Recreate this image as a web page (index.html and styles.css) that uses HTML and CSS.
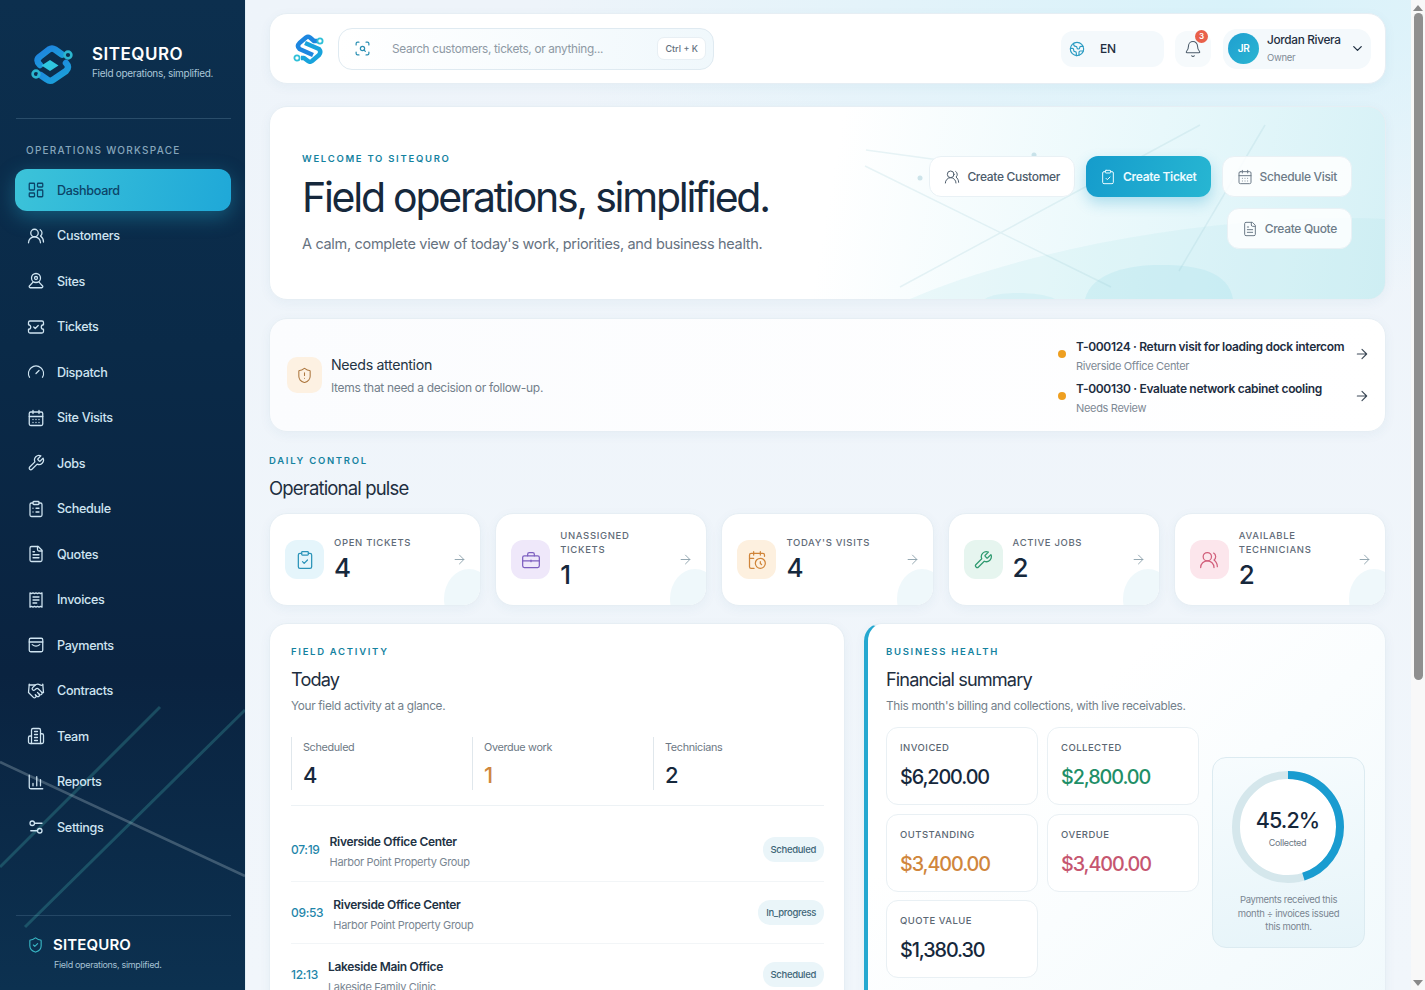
FILE: index.html
```html
<!DOCTYPE html>
<html lang="en">
<head>
<meta charset="utf-8">
<title>SiteQuro Dashboard</title>
<link rel="stylesheet" href="styles.css">
</head>
<body>
<svg class="defs" aria-hidden="true">
<defs>
<linearGradient id="ribbon" x1="0" y1="0" x2="1" y2="1"><stop offset="0" stop-color="#1f7fe0"/><stop offset="1" stop-color="#1aa6d8"/></linearGradient>
<symbol id="i-dash" viewBox="0 0 24 24"><rect width="7" height="9" x="3" y="3" rx="1"/><rect width="7" height="5" x="14" y="3" rx="1"/><rect width="7" height="9" x="14" y="12" rx="1"/><rect width="7" height="5" x="3" y="16" rx="1"/></symbol>
<symbol id="i-users" viewBox="0 0 24 24"><path d="M18 21a8 8 0 0 0-16 0"/><circle cx="10" cy="8" r="5"/><path d="M22 20c0-3.37-2-6.5-4-8a5 5 0 0 0-.45-8.3"/></symbol>
<symbol id="i-site" viewBox="0 0 24 24"><circle cx="12" cy="8" r="6"/><circle cx="12" cy="8" r="2"/><path d="M8 13.5 3.2 18.6A1.5 1.5 0 0 0 4.3 21h15.4a1.500 1.500 0 0 0 1.100-2.400L16 13.500"/></symbol>
<symbol id="i-ticket" viewBox="0 0 24 24"><path d="M2 9a3 3 0 0 1 0 6v3a2 2 0 0 0 2 2h16a2 2 0 0 0 2-2v-3a3 3 0 0 1 0-6V6a2 2 0 0 0-2-2H4a2 2 0 0 0-2 2Z"/><path d="m9 12 2 2 4-4"/></symbol>
<symbol id="i-gauge" viewBox="0 0 24 24"><path d="m12 14 4-4"/><path d="M3.340 19a10 10 0 1 1 17.320 0"/></symbol>
<symbol id="i-cal" viewBox="0 0 24 24"><rect x="3" y="4" width="18" height="18" rx="2"/><path d="M16 2v4M8 2v4M3 10h18M8 14h.01M12 14h.01M16 14h.01M8 18h.01M12 18h.01M16 18h.01"/></symbol>
<symbol id="i-wrench" viewBox="0 0 24 24"><path d="M14.700 6.300a1 1 0 0 0 0 1.400l1.600 1.600a1 1 0 0 0 1.400 0l3.770-3.770a6 6 0 0 1-7.940 7.940l-6.910 6.910a2.120 2.120 0 0 1-3-3l6.910-6.910a6 6 0 0 1 7.940-7.940l-3.760 3.760z"/></symbol>
<symbol id="i-cliplist" viewBox="0 0 24 24"><rect x="8" y="2" width="8" height="4" rx="1"/><path d="M16 4h2a2 2 0 0 1 2 2v14a2 2 0 0 1-2 2H6a2 2 0 0 1-2-2V6a2 2 0 0 1 2-2h2"/><path d="M12 11h4M12 16h4M8 11h.01M8 16h.01"/></symbol>
<symbol id="i-clipcheck" viewBox="0 0 24 24"><rect x="8" y="2" width="8" height="4" rx="1"/><path d="M16 4h2a2 2 0 0 1 2 2v14a2 2 0 0 1-2 2H6a2 2 0 0 1-2-2V6a2 2 0 0 1 2-2h2"/><path d="m9 14 2 2 4-4"/></symbol>
<symbol id="i-file" viewBox="0 0 24 24"><path d="M15 2H6a2 2 0 0 0-2 2v16a2 2 0 0 0 2 2h12a2 2 0 0 0 2-2V7Z"/><path d="M14 2v4a2 2 0 0 0 2 2h4"/><path d="M10 9H8M16 13H8M16 17H8"/></symbol>
<symbol id="i-receipt" viewBox="0 0 24 24"><path d="M4 2.500l2 1 2-1 2 1 2-1 2 1 2-1 2 1 2-1v19l-2-1-2 1-2-1-2 1-2-1-2 1-2-1-2 1z"/><path d="M8 8h8M8 12h8M8 16h5"/></symbol>
<symbol id="i-wallet" viewBox="0 0 24 24"><rect x="3" y="3" width="18" height="18" rx="2"/><path d="M3 8h18"/><path d="M7 11.500q5 4 10 0"/></symbol>
<symbol id="i-hands" viewBox="0 0 24 24"><path d="m11 17 2 2a1 1 0 1 0 3-3"/><path d="m14 14 2.500 2.500a1 1 0 1 0 3-3l-3.880-3.880a3 3 0 0 0-4.240 0l-.88.88a1 1 0 1 1-3-3l2.810-2.810a5.790 5.790 0 0 1 7.060-.87l.47.28a2 2 0 0 0 1.420.25L21 4"/><path d="m21 3 1 11h-2"/><path d="M3 3 2 14l6.500 6.500a1 1 0 1 0 3-3"/><path d="M3 4h8"/></symbol>
<symbol id="i-build" viewBox="0 0 24 24"><path d="M6 22V4a2 2 0 0 1 2-2h8a2 2 0 0 1 2 2v18Z"/><path d="M6 12H4a2 2 0 0 0-2 2v6a2 2 0 0 0 2 2h2"/><path d="M18 9h2a2 2 0 0 1 2 2v9a2 2 0 0 1-2 2h-2"/><path d="M10 6h4M10 10h4M10 14h4M10 18h4"/></symbol>
<symbol id="i-chart" viewBox="0 0 24 24"><path d="M3 3v16a2 2 0 0 0 2 2h16"/><path d="M18 17V9M13 17V5M8 17v-3"/></symbol>
<symbol id="i-sliders" viewBox="0 0 24 24"><path d="M20 7h-9M14 17H5"/><circle cx="17" cy="17" r="3"/><circle cx="7" cy="7" r="3"/></symbol>
<symbol id="i-shieldok" viewBox="0 0 24 24"><path d="M20 13c0 5-3.500 7.500-7.660 8.950a1 1 0 0 1-.67-.01C7.500 20.500 4 18 4 13V6a1 1 0 0 1 1-1c2 0 4.500-1.200 6.240-2.720a1.170 1.170 0 0 1 1.520 0C14.510 3.810 17 5 19 5a1 1 0 0 1 1 1z"/><path d="m9 12 2 2 4-4"/></symbol>
<symbol id="i-shieldwarn" viewBox="0 0 24 24"><path d="M20 13c0 5-3.500 7.500-7.660 8.950a1 1 0 0 1-.67-.01C7.500 20.500 4 18 4 13V6a1 1 0 0 1 1-1c2 0 4.500-1.200 6.240-2.720a1.170 1.170 0 0 1 1.520 0C14.510 3.810 17 5 19 5a1 1 0 0 1 1 1z"/><path d="M12 8v4M12 16h.01"/></symbol>
<symbol id="i-scan" viewBox="0 0 24 24"><path d="M3 7V5a2 2 0 0 1 2-2h2M17 3h2a2 2 0 0 1 2 2v2M21 17v2a2 2 0 0 1-2 2h-2M7 21H5a2 2 0 0 1-2-2v-2"/><circle cx="12" cy="12" r="3"/><path d="m16 16-1.900-1.900"/></symbol>
<symbol id="i-earth" viewBox="0 0 24 24"><path d="M21.540 15H17a2 2 0 0 0-2 2v4.540"/><path d="M7 3.340V5a3 3 0 0 0 3 3a2 2 0 0 1 2 2c0 1.100.9 2 2 2a2 2 0 0 0 2-2c0-1.100.9-2 2-2h3.170"/><path d="M11 21.950V18a2 2 0 0 0-2-2a2 2 0 0 1-2-2v-1a2 2 0 0 0-2-2H2.050"/><circle cx="12" cy="12" r="10"/></symbol>
<symbol id="i-bell" viewBox="0 0 24 24"><path d="M10.268 21a2 2 0 0 0 3.464 0"/><path d="M3.262 15.326A1 1 0 0 0 4 17h16a1 1 0 0 0 .74-1.673C19.410 13.956 18 12.499 18 8A6 6 0 0 0 6 8c0 4.499-1.411 5.956-2.738 7.326"/></symbol>
<symbol id="i-chev" viewBox="0 0 24 24"><path d="m6 9 6 6 6-6"/></symbol>
<symbol id="i-arrow" viewBox="0 0 24 24"><path d="M5 12h14M12 5l7 7-7 7"/></symbol>
<symbol id="i-brief" viewBox="0 0 24 24"><path d="M16 7V5a2 2 0 0 0-2-2h-4a2 2 0 0 0-2 2v2"/><rect x="2" y="7" width="20" height="14" rx="2"/><path d="M2 13h20M12 12v2"/></symbol>
<symbol id="i-calclock" viewBox="0 0 24 24"><path d="M21 7.500V6a2 2 0 0 0-2-2H5a2 2 0 0 0-2 2v14a2 2 0 0 0 2 2h3.500"/><path d="M16 2v4M8 2v4M3 10h5"/><path d="M17.500 17.500 16 16.300V14"/><circle cx="16" cy="16" r="6"/></symbol>
</defs>
</svg>

<div class="app">
  <aside class="sidebar">
    <svg class="side-lines" viewBox="0 0 245 990" aria-hidden="true">
      <path class="ln-teal" d="M160 707 0 867"/>
      <path class="ln-teal" d="M245 710 25 927"/>
      <path class="ln-gray" d="M0 762 245 876"/>
    </svg>
    <div class="brand">
      <svg class="brand-logo" viewBox="0 0 48 42" aria-hidden="true">
        <path class="rb" d="M10 21Q5 16 10 12.500L19 5.500Q22 3.500 25 5.500L32 10.500"/>
        <circle class="node" cx="38" cy="11" r="3.400"/>
        <path class="rb" d="M10.500 31L17 35.500Q20 38 23.500 35.500L36 27Q40 23 36 19"/>
        <circle class="node" cx="6" cy="30" r="3.400"/>
        <path class="gem" d="M20 16 28.500 21.500 20 27 11.500 21.500Z"/>
      </svg>
      <div class="brand-text">
        <div class="brand-name">SITEQURO</div>
        <div class="brand-tag">Field operations, simplified.</div>
      </div>
    </div>
    <div class="side-rule"></div>
    <div class="side-head">OPERATIONS WORKSPACE</div>
    <nav class="nav">
      <a class="nav-item active"><svg class="ic"><use href="#i-dash"/></svg>Dashboard</a>
      <a class="nav-item"><svg class="ic"><use href="#i-users"/></svg>Customers</a>
      <a class="nav-item"><svg class="ic"><use href="#i-site"/></svg>Sites</a>
      <a class="nav-item"><svg class="ic"><use href="#i-ticket"/></svg>Tickets</a>
      <a class="nav-item"><svg class="ic"><use href="#i-gauge"/></svg>Dispatch</a>
      <a class="nav-item"><svg class="ic"><use href="#i-cal"/></svg>Site Visits</a>
      <a class="nav-item"><svg class="ic"><use href="#i-wrench"/></svg>Jobs</a>
      <a class="nav-item"><svg class="ic"><use href="#i-cliplist"/></svg>Schedule</a>
      <a class="nav-item"><svg class="ic"><use href="#i-file"/></svg>Quotes</a>
      <a class="nav-item"><svg class="ic"><use href="#i-receipt"/></svg>Invoices</a>
      <a class="nav-item"><svg class="ic"><use href="#i-wallet"/></svg>Payments</a>
      <a class="nav-item"><svg class="ic"><use href="#i-hands"/></svg>Contracts</a>
      <a class="nav-item"><svg class="ic"><use href="#i-build"/></svg>Team</a>
      <a class="nav-item"><svg class="ic"><use href="#i-chart"/></svg>Reports</a>
      <a class="nav-item"><svg class="ic"><use href="#i-sliders"/></svg>Settings</a>
    </nav>
    <div class="side-foot">
      <div class="foot-row"><svg class="ic foot-ic"><use href="#i-shieldok"/></svg><span class="foot-name">SITEQURO</span></div>
      <div class="foot-tag">Field operations, simplified.</div>
    </div>
  </aside>

  <main class="main">
    <header class="topbar card">
      <svg class="top-logo" viewBox="0 0 32 30" aria-hidden="true">
        <path class="s1" d="M24 7H21L17 3.500Q15 2 13 3.500L6.500 9Q3.500 12 6.500 15L20 21"/>
        <path class="s2" d="M8 24H11L15 27Q17 28.500 19 27L26 21Q28.500 18 26 15L12 9"/>
        <circle class="s-node" cx="27" cy="7" r="2.600"/>
        <circle class="s-node" cx="4" cy="24" r="2.600"/>
      </svg>
      <div class="search">
        <svg class="ic search-ic"><use href="#i-scan"/></svg>
        <span class="search-text">Search customers, tickets, or anything...</span>
        <span class="kbd">Ctrl + K</span>
      </div>
      <div class="top-right">
        <div class="lang"><svg class="ic lang-ic"><use href="#i-earth"/></svg><span>EN</span></div>
        <div class="bell"><svg class="ic bell-ic"><use href="#i-bell"/></svg><span class="badge">3</span></div>
        <div class="user">
          <span class="avatar">JR</span>
          <span class="user-text"><span class="user-name">Jordan Rivera</span><span class="user-role">Owner</span></span>
          <svg class="ic chev"><use href="#i-chev"/></svg>
        </div>
      </div>
    </header>

    <section class="hero card">
      <svg class="hero-art" viewBox="0 0 1116 192" aria-hidden="true">
        <path class="blob1" d="M640 192C760 140 960 105 1116 112V192Z"/>
        <path class="blob2" d="M815 192C822 165 860 158 890 158C930 158 958 165 963 192Z"/>
        <path class="blob3" d="M715 192C725 184 770 184 785 192Z"/>
        <path class="hl" d="M595 59 841 180M596 43 780 68M630 180 930 18M995 18 909 164"/>
        <circle class="hd" cx="650" cy="71" r="2.500"/>
        <circle class="hd" cx="764" cy="48" r="2.500"/>
      </svg>
      <div class="hero-copy">
        <div class="eyebrow">WELCOME TO SITEQURO</div>
        <h1 class="hero-title">Field operations, simplified.</h1>
        <p class="hero-sub">A calm, complete view of today's work, priorities, and business health.</p>
      </div>
      <div class="hero-actions">
        <a class="btn btn-dark"><svg class="ic"><use href="#i-users"/></svg>Create Customer</a>
        <a class="btn btn-primary"><svg class="ic"><use href="#i-clipcheck"/></svg>Create Ticket</a>
        <a class="btn"><svg class="ic"><use href="#i-cal"/></svg>Schedule Visit</a>
        <a class="btn"><svg class="ic"><use href="#i-file"/></svg>Create Quote</a>
      </div>
    </section>

    <section class="attention card">
      <span class="att-icon"><svg class="ic"><use href="#i-shieldwarn"/></svg></span>
      <div class="att-copy">
        <div class="att-title">Needs attention</div>
        <div class="att-sub">Items that need a decision or follow-up.</div>
      </div>
      <div class="att-list">
        <div class="att-row"><span class="dot"></span><div class="att-text"><div class="att-name">T-000124 · Return visit for loading dock intercom</div><div class="att-meta">Riverside Office Center</div></div><svg class="ic att-arrow"><use href="#i-arrow"/></svg></div>
        <div class="att-row"><span class="dot"></span><div class="att-text"><div class="att-name">T-000130 · Evaluate network cabinet cooling</div><div class="att-meta">Needs Review</div></div><svg class="ic att-arrow"><use href="#i-arrow"/></svg></div>
      </div>
    </section>

    <section class="pulse-head">
      <div class="eyebrow">DAILY CONTROL</div>
      <h2 class="section-title">Operational pulse</h2>
    </section>

    <section class="stats">
      <div class="stat card"><span class="stat-ic tone-blue"><svg class="ic"><use href="#i-clipcheck"/></svg></span><div class="stat-text"><div class="stat-label">OPEN TICKETS</div><div class="stat-value">4</div></div><svg class="ic stat-arrow"><use href="#i-arrow"/></svg></div>
      <div class="stat card"><span class="stat-ic tone-purple"><svg class="ic"><use href="#i-brief"/></svg></span><div class="stat-text"><div class="stat-label">UNASSIGNED TICKETS</div><div class="stat-value">1</div></div><svg class="ic stat-arrow"><use href="#i-arrow"/></svg></div>
      <div class="stat card"><span class="stat-ic tone-orange"><svg class="ic"><use href="#i-calclock"/></svg></span><div class="stat-text"><div class="stat-label">TODAY'S VISITS</div><div class="stat-value">4</div></div><svg class="ic stat-arrow"><use href="#i-arrow"/></svg></div>
      <div class="stat card"><span class="stat-ic tone-green"><svg class="ic"><use href="#i-wrench"/></svg></span><div class="stat-text"><div class="stat-label">ACTIVE JOBS</div><div class="stat-value">2</div></div><svg class="ic stat-arrow"><use href="#i-arrow"/></svg></div>
      <div class="stat card"><span class="stat-ic tone-pink"><svg class="ic"><use href="#i-users"/></svg></span><div class="stat-text"><div class="stat-label">AVAILABLE TECHNICIANS</div><div class="stat-value">2</div></div><svg class="ic stat-arrow"><use href="#i-arrow"/></svg></div>
    </section>

    <section class="panels">
      <div class="panel card">
        <div class="eyebrow">FIELD ACTIVITY</div>
        <h2 class="panel-title">Today</h2>
        <p class="panel-sub">Your field activity at a glance.</p>
        <div class="metrics">
          <div class="metric"><div class="metric-label">Scheduled</div><div class="metric-value">4</div></div>
          <div class="metric"><div class="metric-label">Overdue work</div><div class="metric-value orange">1</div></div>
          <div class="metric"><div class="metric-label">Technicians</div><div class="metric-value">2</div></div>
        </div>
        <div class="visits">
          <div class="visit"><span class="visit-time">07:19</span><div class="visit-text"><div class="visit-name">Riverside Office Center</div><div class="visit-sub">Harbor Point Property Group</div></div><span class="pill">Scheduled</span></div>
          <div class="visit"><span class="visit-time">09:53</span><div class="visit-text"><div class="visit-name">Riverside Office Center</div><div class="visit-sub">Harbor Point Property Group</div></div><span class="pill">In_progress</span></div>
          <div class="visit"><span class="visit-time">12:13</span><div class="visit-text"><div class="visit-name">Lakeside Main Office</div><div class="visit-sub">Lakeside Family Clinic</div></div><span class="pill">Scheduled</span></div>
        </div>
      </div>
      <div class="panel panel-fin card">
        <div class="eyebrow">BUSINESS HEALTH</div>
        <h2 class="panel-title">Financial summary</h2>
        <p class="panel-sub">This month's billing and collections, with live receivables.</p>
        <div class="fin-body">
          <div class="fin-grid">
            <div class="mini"><div class="mini-label">INVOICED</div><div class="mini-value">$6,200.00</div></div>
            <div class="mini"><div class="mini-label">COLLECTED</div><div class="mini-value green">$2,800.00</div></div>
            <div class="mini"><div class="mini-label">OUTSTANDING</div><div class="mini-value orange">$3,400.00</div></div>
            <div class="mini"><div class="mini-label">OVERDUE</div><div class="mini-value red">$3,400.00</div></div>
            <div class="mini"><div class="mini-label">QUOTE VALUE</div><div class="mini-value">$1,380.30</div></div>
          </div>
          <div class="ring-card">
            <div class="ring">
              <svg class="ring-svg" viewBox="0 0 112 112" aria-hidden="true">
                <circle class="ring-track" cx="56" cy="56" r="52"/>
                <circle class="ring-fill" cx="56" cy="56" r="52" pathLength="100" stroke-dasharray="45.2 100"/>
              </svg>
              <div class="ring-label"><div class="ring-pct">45.2%</div><div class="ring-cap">Collected</div></div>
            </div>
            <p class="ring-note">Payments received this month ÷ invoices issued this month.</p>
          </div>
        </div>
      </div>
    </section>
  </main>

  <div class="scrollbar" aria-hidden="true">
    <span class="sb-up"></span>
    <span class="sb-thumb"></span>
    <span class="sb-down"></span>
  </div>
</div>
</body>
</html>
```
FILE: styles.css
```css
* { box-sizing: border-box; }
html, body { margin: 0; height: 990px; overflow: hidden; }
body { font-family: "Inter", "Noto Sans", sans-serif; color: #16283c; letter-spacing: -0.02em; background: #f3f7fb; }
p, h1, h2 { margin: 0; font-weight: 400; }
.defs { position: absolute; width: 0; height: 0; }
.ic { width: 18px; height: 18px; flex: none; fill: none; stroke: currentColor; stroke-width: 1.7; stroke-linecap: round; stroke-linejoin: round; }
.app { display: flex; height: 990px; }

/* sidebar */
.sidebar { position: relative; width: 245px; flex: none; height: 990px; padding: 0 14px 0 15px; display: flex; flex-direction: column; overflow: hidden; background: linear-gradient(180deg, #0c2f4e 0%, #0a2a48 35%, #0a2340 68%, #0c3150 100%); color: #cfe4f1; box-shadow: 1px 0 0 #e2eef5; }
.side-lines { position: absolute; left: 0; top: 0; width: 245px; height: 990px; pointer-events: none; }
.ln-teal { stroke: rgba(66, 170, 170, .3); stroke-width: 3; fill: none; }
.ln-gray { stroke: rgba(170, 190, 200, .32); stroke-width: 2.5; fill: none; }
.brand { display: flex; gap: 14px; padding: 44px 0 0 15px; height: 103px; align-items: flex-start; }
.brand-logo { width: 48px; height: 42px; flex: none; }
.rb { fill: none; stroke: url(#ribbon); stroke-width: 6.500; stroke-linejoin: round; stroke-linecap: round; }
.node { fill: none; stroke: #2cb6cf; stroke-width: 2.600; }
.gem { fill: #2fc7e0; }
.brand-name { font-size: 17px; line-height: 20px; font-weight: 600; color: #fff; letter-spacing: .03em; }
.brand-tag { font-size: 10px; line-height: 14px; margin-top: 2px; color: #aac6d8; letter-spacing: -0.03em; }
.side-rule { height: 1px; margin: 15px 0 0 1px; background: rgba(150, 190, 215, .22); flex: none; }
.side-head { font-size: 10px; line-height: 14px; letter-spacing: .125em; color: #86a6bb; font-weight: 500; padding: 24px 0 0 11px; height: 50px; flex: none; }
.nav { position: relative; display: flex; flex-direction: column; gap: 3.500px; }
.nav-item { display: flex; align-items: center; gap: 12px; height: 42px; padding: 0 12px; border-radius: 12px; font-size: 12.600px; font-weight: 500; color: #cfe4f1; }
.nav-item.active { color: #0c4468; background: linear-gradient(105deg, #3cc3d9, #1fa8d8); box-shadow: 0 6px 20px rgba(40, 180, 215, .35); }
.side-foot { position: relative; margin-top: auto; margin-left: 1px; border-top: 1px solid rgba(150, 190, 215, .18); padding: 20px 0 0 11px; height: 75px; flex: none; }
.foot-row { display: flex; align-items: center; gap: 9px; }
.foot-ic { color: #38b6c4; width: 17px; height: 18px; stroke-width: 1.600; }
.foot-name { font-size: 15px; line-height: 18px; font-weight: 600; color: #fff; letter-spacing: .01em; }
.foot-tag { font-size: 9px; line-height: 12px; margin: 5px 0 0 27px; color: #a5c1d3; }

/* main */
.main { flex: 1; min-width: 0; height: 990px; overflow: hidden; padding: 13px 25px 0 24px; display: flex; flex-direction: column; background: radial-gradient(700px 300px at 85% 0%, #d8f2fa 0%, rgba(216, 242, 250, 0) 100%), linear-gradient(180deg, #eef4fa, #f1f6fb); }
.card { background: #fff; border: 1px solid #e6eef4; border-radius: 18px; box-shadow: 0 3px 12px rgba(40, 90, 130, .05); }

.topbar { display: flex; align-items: center; height: 71px; flex: none; padding: 0 14px 0 23px; }
.top-logo { width: 32px; height: 30px; flex: none; }
.s1 { fill: none; stroke: #1c86e0; stroke-width: 4.500; stroke-linejoin: round; }
.s2 { fill: none; stroke: #18a3dc; stroke-width: 4.500; stroke-linejoin: round; }
.s-node { fill: none; stroke: #2fc0d8; stroke-width: 1.800; }
.search { display: flex; align-items: center; width: 376px; height: 42px; margin-left: 13px; padding: 0 7px 0 15px; border: 1px solid #dfeaf1; border-radius: 14px; background: linear-gradient(90deg, #fff, #f0f8fc); }
.search-ic { width: 17px; height: 17px; color: #2a8fb3; }
.search-text { margin-left: 21px; flex: 1; font-size: 11.800px; color: #8e99a4; }
.kbd { font-size: 9px; font-weight: 500; color: #65727e; background: #fff; border: 1px solid #e8eff4; border-radius: 7px; padding: 0 7px; line-height: 21px; letter-spacing: 0; }
.top-right { display: flex; align-items: center; margin-left: auto; }
.lang { display: flex; align-items: center; gap: 15px; width: 103px; height: 36px; padding-left: 8px; border-radius: 12px; background: #f4f9fc; font-size: 12px; font-weight: 500; color: #1e2e40; }
.lang-ic { width: 16px; height: 16px; color: #2a9bc2; }
.bell { position: relative; display: flex; align-items: center; justify-content: center; width: 36px; height: 36px; margin-left: 11px; border-radius: 12px; background: #f6fafc; }
.bell-ic { color: #4b5b6a; stroke-width: 1.400; }
.badge { position: absolute; top: -1px; right: 3px; width: 13px; height: 13px; border-radius: 50%; background: #e8604a; color: #fff; font-size: 8px; font-weight: 600; line-height: 13px; text-align: center; }
.user { display: flex; align-items: center; width: 148px; height: 40px; margin-left: 12px; padding: 0 6px 0 5px; border-radius: 14px; background: #f4f9fc; }
.avatar { width: 31px; height: 31px; flex: none; border-radius: 50%; background: linear-gradient(135deg, #1f9fd0, #2ab5d2); color: #fff; font-size: 10px; font-weight: 600; line-height: 31px; text-align: center; }
.user-text { display: flex; flex-direction: column; margin-left: 8px; flex: 1; }
.user-name { font-size: 11.800px; line-height: 15px; font-weight: 500; color: #1e2e40; }
.user-role { font-size: 9.500px; line-height: 13px; margin-top: 3px; color: #7e8a95; }
.chev { width: 15px; height: 15px; color: #1e2e40; stroke-width: 2; }

/* hero */
.hero { position: relative; overflow: hidden; display: flex; justify-content: space-between; height: 194px; flex: none; margin-top: 22px; padding: 0 33px 0 32px; background: linear-gradient(100deg, #fff 50%, #e8f8fb 78%, #d6f1f6 100%); }
.hero-art { position: absolute; left: 0; top: 0; width: 1116px; height: 192px; pointer-events: none; }
.blob1 { fill: rgba(170, 225, 235, .18); }
.blob2 { fill: rgba(150, 218, 230, .22); }
.blob3 { fill: rgba(150, 218, 230, .16); }
.hl { fill: none; stroke: rgba(150, 200, 210, .2); stroke-width: 1.500; }
.hd { fill: rgba(140, 190, 205, .4); }
.hero-copy { position: relative; padding-top: 45px; }
.eyebrow { font-size: 9.500px; line-height: 13px; font-weight: 600; letter-spacing: .18em; color: #14829f; }
.hero-title { font-size: 41px; line-height: 48px; margin-top: 8px; letter-spacing: -0.055em; color: #16283c; }
.hero-sub { font-size: 14.500px; line-height: 20px; margin-top: 13px; color: #66727f; }
.hero-actions { position: relative; display: flex; flex-wrap: wrap; justify-content: flex-end; align-content: flex-start; gap: 11px; width: 425px; padding-top: 49px; }
.btn { display: flex; align-items: center; gap: 7px; height: 41px; padding: 0 14px; border-radius: 12px; font-size: 12px; font-weight: 500; color: #6d7b88; background: rgba(255, 255, 255, .85); border: 1px solid #e9f1f5; }
.btn .ic { width: 16px; height: 16px; stroke-width: 1.500; }
.btn-dark { color: #4d5c6b; background: #fff; }
.btn-primary { color: #eafaff; font-weight: 600; border: 0; background: linear-gradient(105deg, #159ccc, #27b6d2); box-shadow: 0 6px 14px rgba(30, 160, 205, .3); }

/* attention */
.attention { display: flex; align-items: center; height: 114px; flex: none; margin-top: 18px; padding: 0 15px 0 17px; background: linear-gradient(90deg, #fbfcfe, #fff); }
.att-icon { display: flex; align-items: center; justify-content: center; width: 35px; height: 36px; flex: none; border-radius: 10px; background: #fdf1e2; color: #ad7840; }
.att-icon .ic { width: 17px; height: 17px; stroke-width: 1.500; }
.att-copy { margin-left: 9px; flex: 1; }
.att-title { font-size: 14.200px; line-height: 18px; color: #243444; }
.att-sub { font-size: 12px; line-height: 15px; margin-top: 6px; color: #737f8b; }
.att-list { display: flex; flex-direction: column; }
.att-row { display: flex; align-items: center; height: 42px; }
.dot { width: 8px; height: 8px; border-radius: 50%; background: #ee9f20; flex: none; margin-right: 10px; }
.att-text { width: 278px; padding-top: 3px; }
.att-name { font-size: 12px; line-height: 15px; font-weight: 600; color: #1d2d3f; white-space: nowrap; }
.att-meta { font-size: 11px; line-height: 13px; margin-top: 6px; color: #7e8a95; }
.att-arrow { width: 16px; height: 16px; color: #3c4957; }

/* pulse */
.pulse-head { flex: none; margin-top: 22px; }
.section-title { font-size: 18.500px; line-height: 26px; margin-top: 8px; letter-spacing: -0.045em; color: #1e2e40; }
.stats { display: grid; grid-template-columns: repeat(5, 1fr); gap: 14px; flex: none; margin-top: 12px; }
.stat { position: relative; overflow: hidden; display: flex; align-items: center; height: 93px; padding: 0 13px 0 15px; }
.stat::after { content: ""; position: absolute; right: -14px; bottom: -24px; width: 50px; height: 60px; border-radius: 50%; background: #eff8fb; }
.stat-ic { display: flex; align-items: center; justify-content: center; width: 39px; height: 39px; flex: none; border-radius: 12px; }
.tone-blue { background: #e5f5fb; color: #2a93b8; }
.tone-purple { background: #efe8fa; color: #7d5fc0; }
.tone-orange { background: #fdf0df; color: #d0853a; }
.tone-green { background: #e6f5ef; color: #2f9a70; }
.tone-pink { background: #fce6ec; color: #d2607c; }
.stat-ic .ic { width: 20px; height: 20px; stroke-width: 1.500; }
.stat-text { margin-left: 10px; flex: 1; min-width: 0; }
.stat-label { font-size: 9.500px; line-height: 14px; font-weight: 500; letter-spacing: .07em; color: #5f6b78; }
.stat-value { font-size: 26px; line-height: 30px; font-weight: 500; color: #16283c; margin-top: 3px; }
.stat-arrow { position: relative; width: 15px; height: 15px; color: #8ea2ad; stroke-width: 1.500; z-index: 1; margin-left: 8px; }

/* panels */
.panels { display: grid; grid-template-columns: 576px 1fr; gap: 19px; flex: none; margin-top: 17px; }
.panel { height: 420px; padding: 21px 20px 0 21px; overflow: hidden; border-radius: 18px 18px 0 0; }
.panel-title { font-size: 18.200px; line-height: 26px; margin-top: 8px; letter-spacing: -0.05em; color: #1e2e40; }
.panel-sub { font-size: 11.800px; line-height: 15px; margin-top: 7px; color: #737f8b; }
.metrics { display: grid; grid-template-columns: repeat(3, 1fr); gap: 10px; margin-top: 23px; padding-bottom: 15px; border-bottom: 1px solid #edf2f5; }
.metric { border-left: 1px solid #e0e7ec; padding-left: 11px; height: 53px; }
.metric-label { font-size: 10.800px; line-height: 14px; padding-top: 4px; color: #6c7884; }
.metric-value { font-size: 22px; line-height: 26px; margin-top: 7px; font-weight: 500; color: #16283c; }
.orange { color: #d0863c; }
.green { color: #1f8f68; }
.red { color: #c65670; }
.visits { margin-top: 13px; }
.visit { display: flex; align-items: center; height: 62.500px; border-bottom: 1px solid #f2f5f7; }
.visit-time { font-size: 12px; color: #1f86aa; font-weight: 500; }
.visit-text { margin-left: 10px; flex: 1; padding-top: 4px; }
.visit-name { font-size: 12px; line-height: 15px; font-weight: 600; color: #223244; }
.visit-sub { font-size: 11px; line-height: 14px; margin-top: 6px; color: #7a8692; }
.pill { font-size: 9.500px; font-weight: 500; line-height: 25px; padding: 0 8px; border-radius: 12px; background: #eaf5f9; color: #3f6678; }
.panel-fin { position: relative; background: linear-gradient(140deg, #fff 30%, #f0f9fc 100%); border-left: 4px solid #25a8d0; padding-left: 18px; }
.fin-body { display: grid; grid-template-columns: 313px 153px; gap: 13px; margin-top: 13px; }
.fin-grid { display: grid; grid-template-columns: 152px 152px; gap: 8.500px 9px; align-self: start; }
.mini { height: 78px; padding: 13px 13px 0; background: #fff; border: 1px solid #e9f0f4; border-radius: 12px; }
.mini-label { font-size: 9.500px; line-height: 13px; font-weight: 500; letter-spacing: .05em; color: #5b6773; }
.mini-value { font-size: 19.800px; line-height: 26px; margin-top: 10px; font-weight: 500; letter-spacing: -0.055em; }
.ring-card { align-self: start; margin-top: 30px; height: 191px; padding: 13px 8px 0; border: 1px solid #dcebf1; border-radius: 14px; background: linear-gradient(170deg, #f7fcfe, #e6f4f9); text-align: center; }
.ring { position: relative; width: 112px; height: 112px; margin: 0 auto; left: -1px; }
.ring-svg { width: 112px; height: 112px; transform: rotate(-90deg); }
.ring-track { fill: #fff; stroke: #d5e7ec; stroke-width: 8; }
.ring-fill { fill: none; stroke: #1a9cd0; stroke-width: 8; }
.ring-label { position: absolute; left: 0; right: 0; top: 35px; }
.ring-pct { font-size: 21.500px; line-height: 28px; font-weight: 500; letter-spacing: -0.04em; color: #16283c; }
.ring-cap { font-size: 9px; line-height: 12px; margin-top: 3px; color: #6c7884; }
.ring-note { font-size: 9.500px; line-height: 13.500px; margin-top: 10px; padding: 0 10px; color: #7a8692; }

/* scrollbar */
.scrollbar { width: 14px; flex: none; height: 990px; background: #f8f8f8; display: flex; flex-direction: column; align-items: center; }
.sb-up { width: 0; height: 0; margin-top: 5px; border: 5px solid transparent; border-top: 0; border-bottom: 6px solid #8a8a8a; }
.sb-thumb { width: 9px; height: 667px; margin-top: 2px; border-radius: 5px; background: #8f8f8f; }
.sb-down { width: 0; height: 0; margin-top: auto; margin-bottom: 4px; border: 5px solid transparent; border-bottom: 0; border-top: 6px solid #8a8a8a; }
```
